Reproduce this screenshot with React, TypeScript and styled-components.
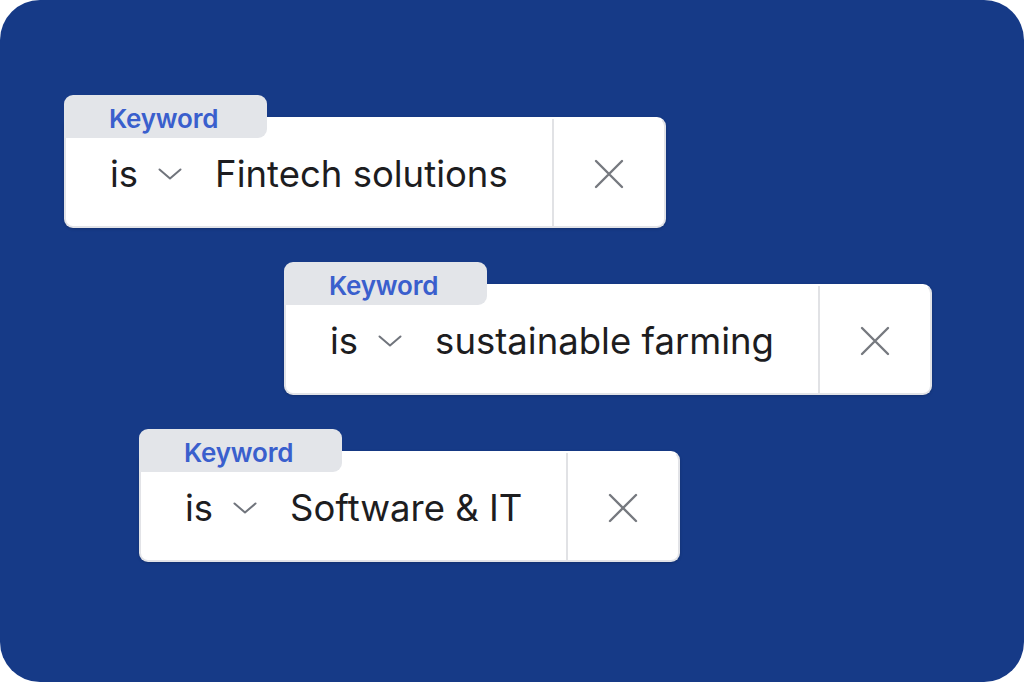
import React from 'react';
import styled, { createGlobalStyle } from 'styled-components';

const GlobalStyle = createGlobalStyle`
  html, body {
    margin: 0;
    padding: 0;
    background: #ffffff;
  }
  body {
    font-family: Inter, "Noto Sans", sans-serif;
  }
`;

const Panel = styled.div`
  width: 1024px;
  height: 682px;
  box-sizing: border-box;
  background-color: #163a87;
  border-radius: 40px;
  padding-top: 95px;
  display: flex;
  flex-direction: column;
  align-items: flex-start;
  gap: 34px;
`;

const Filter = styled.div<{ $indent: number }>`
  display: flex;
  flex-direction: column;
  align-items: flex-start;
  margin-left: ${(p) => p.$indent}px;
`;

const Tab = styled.div`
  position: relative;
  z-index: 1;
  box-sizing: border-box;
  width: 203px;
  height: 43px;
  margin-bottom: -21px;
  padding: 9px 0 0 45px;
  background-color: #e3e5e9;
  border-radius: 9px 9px 9px 0;
  color: #3a5fcd;
  font-size: 26px;
  font-weight: 600;
  line-height: 30px;
  letter-spacing: -0.2px;
`;

const Body = styled.div`
  box-sizing: border-box;
  height: 111px;
  display: flex;
  align-items: stretch;
  background-color: #ffffff;
  border: 2px solid #e2e3e7;
  border-top-color: #ffffff;
  border-radius: 9px;
  box-shadow: 0 1px 3px rgba(0, 0, 0, 0.18);
`;

const Condition = styled.div`
  display: flex;
  align-items: center;
  padding: 3px 44px 0 44px;
  color: #1d1d1f;
  font-size: 36.5px;
  line-height: 44px;
  white-space: nowrap;
`;

const Operator = styled.span`
  margin-right: 20px;
`;

const Chevron = styled.svg`
  width: 24px;
  height: 12px;
  margin-right: 33px;
`;

const ClearCell = styled.div`
  width: 110px;
  display: flex;
  align-items: center;
  justify-content: center;
  padding-top: 3px;
  border-left: 2px solid #e1e2e5;
`;

const Cross = styled.svg`
  width: 30px;
  height: 30px;
`;

interface FilterProps {
  value: string;
  indent: number;
}

const KeywordFilter: React.FC<FilterProps> = ({ value, indent }) => {
  return (
    <Filter $indent={indent}>
      <Tab>Keyword</Tab>
      <Body>
        <Condition>
          <Operator>is</Operator>
          <Chevron viewBox="0 0 24 12" fill="none">
            <polyline
              points="1.5,1.5 12,10.5 22.5,1.5"
              stroke="#70747c"
              strokeWidth="2"
              strokeLinecap="round"
              strokeLinejoin="round"
            />
          </Chevron>
          <span>{value}</span>
        </Condition>
        <ClearCell>
          <Cross viewBox="0 0 30 30" fill="none">
            <path
              d="M2 2 L28 28 M28 2 L2 28"
              stroke="#76797f"
              strokeWidth="2.4"
              strokeLinecap="round"
            />
          </Cross>
        </ClearCell>
      </Body>
    </Filter>
  );
};

const filters = [
  { value: 'Fintech solutions', indent: 64 },
  { value: 'sustainable farming', indent: 284 },
  { value: 'Software & IT', indent: 139 },
];

export default function App() {
  return (
    <>
      <GlobalStyle />
      <Panel>
        {filters.map((f) => (
          <KeywordFilter key={f.value} value={f.value} indent={f.indent} />
        ))}
      </Panel>
    </>
  );
}
